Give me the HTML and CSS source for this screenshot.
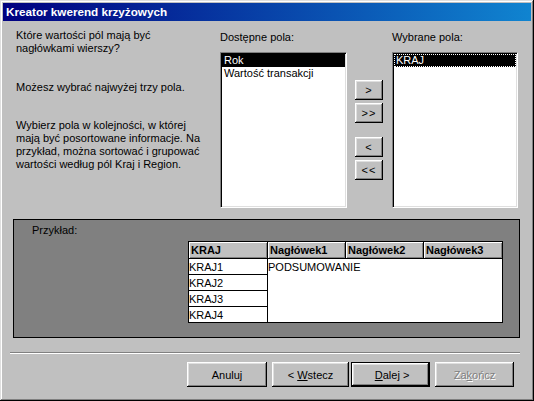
FILE: index.html
```html
<!DOCTYPE html>
<html lang="pl">
<head>
<meta charset="utf-8">
<title>Kreator kwerend krzyżowych</title>
<link rel="stylesheet" href="styles.css">
</head>
<body>
<div class="window">
  <div class="titlebar"><span class="title">Kreator kwerend krzyżowych</span></div>
  <div class="client">
    <div class="top">
      <div class="intro">
        <p class="q">Które wartości pól mają być<br>nagłówkami wierszy?</p>
        <p class="p2">Możesz wybrać najwyżej trzy pola.</p>
        <p class="p3">Wybierz pola w kolejności, w której<br>mają być posortowane informacje. Na<br>przykład, można sortować i grupować<br>wartości według pól Kraj i Region.</p>
      </div>
      <div class="field-col avail">
        <div class="label">Dostępne pola:</div>
        <div class="listbox">
          <div class="item selected">Rok</div>
          <div class="item">Wartość transakcji</div>
        </div>
      </div>
      <div class="movers">
        <button class="btn mv">&gt;</button>
        <button class="btn mv">&gt;&gt;</button>
        <button class="btn mv split">&lt;</button>
        <button class="btn mv">&lt;&lt;</button>
      </div>
      <div class="field-col chosen">
        <div class="label">Wybrane pola:</div>
        <div class="listbox">
          <div class="item selected focus">KRAJ</div>
        </div>
      </div>
    </div>
    <div class="sample">
      <div class="sample-label">Przykład:</div>
      <div class="grid">
        <div class="hd">KRAJ</div>
        <div class="hd">Nagłówek1</div>
        <div class="hd">Nagłówek2</div>
        <div class="hd">Nagłówek3</div>
        <div class="rc">KRAJ1</div>
        <div class="sum">PODSUMOWANIE</div>
        <div class="rc">KRAJ2</div>
        <div class="rc">KRAJ3</div>
        <div class="rc">KRAJ4</div>
      </div>
    </div>
    <div class="sep"></div>
    <div class="actions">
      <button class="btn act cancel">Anuluj</button>
      <button class="btn act back">&lt; <u>W</u>stecz</button>
      <button class="btn act next">&nbsp;<u>D</u>alej &gt;</button>
      <button class="btn act finish" disabled>Za<u>k</u>ończ</button>
    </div>
  </div>
</div>
</body>
</html>
```
FILE: styles.css
```css
* { box-sizing: border-box; }
html, body { margin: 0; padding: 0; }
body {
  width: 534px;
  height: 401px;
  background: #c0c0c0;
  font-family: "Liberation Sans", Arial, sans-serif;
  font-size: 11px;
  color: #000;
  overflow: hidden;
}
.window {
  width: 534px;
  height: 401px;
  background: #c0c0c0;
  padding: 3px;
  box-shadow: inset -1px -1px #000, inset 1px 1px #dfdfdf, inset -2px -2px #808080, inset 2px 2px #fff;
}
.titlebar {
  height: 18px;
  background: linear-gradient(90deg, #000080, #1084d0);
  color: #fff;
  font-weight: bold;
  font-size: 11.7px;
  line-height: 18px;
  padding-left: 3px;
  white-space: nowrap;
}
.client { display: flex; flex-direction: column; }
.top {
  display: flex;
  padding-top: 8px;
  padding-left: 13px;
}
.intro { width: 204px; }
.intro p { margin: 0; line-height: 13px; white-space: nowrap; }
.intro .p2 { margin-top: 26px; }
.intro .p3 { margin-top: 25px; }
.field-col { display: flex; flex-direction: column; }
.avail { width: 127px; }
.chosen { width: 126px; margin-left: 9px; }
.label { margin-top: 2px; line-height: 13px; white-space: nowrap; }
.listbox {
  margin-top: 8px;
  height: 156px;
  background: #fff;
  border: 1px solid;
  border-color: #808080 #fff #fff #808080;
  box-shadow: inset 1px 1px #000, inset -1px -1px #dfdfdf;
  padding: 1px;
}
.item {
  height: 13px;
  line-height: 13px;
  padding-left: 2px;
  white-space: nowrap;
}
.item.selected { background: #000; color: #fff; }
.item.focus { outline: 1px dotted #fff; outline-offset: -1px; }
.btn {
  font-family: inherit;
  font-size: 11px;
  color: #000;
  background: #c0c0c0;
  border: none;
  padding: 0;
  margin: 0;
  box-shadow: inset -1px -1px #000, inset 1px 1px #fff, inset -2px -2px #808080, inset 2px 2px #dfdfdf;
}
.movers {
  display: flex;
  flex-direction: column;
  margin-left: 8px;
  margin-top: 51px;
  gap: 3px;
}
.mv { width: 28px; height: 20px; line-height: 18px; letter-spacing: 1px; }
.mv.split { margin-top: 11px; }
.sample {
  margin-left: 10px;
  margin-top: 11px;
  width: 507px;
  height: 119px;
  background: #808080;
  border: 1px solid #000;
}
.sample-label { margin: 4px 0 0 18px; line-height: 13px; }
.grid {
  margin: 4px 0 0 174px;
  display: grid;
  grid-template-columns: 79px 78px 78px 79px;
  grid-template-rows: 17px 16px 16px 16px 16px;
  width: 315px;
  border-top: 1px solid #000;
  border-left: 1px solid #000;
}
.grid > div {
  border-right: 1px solid #000;
  border-bottom: 1px solid #000;
  white-space: nowrap;
  overflow: hidden;
}
.hd {
  background: #c0c0c0;
  font-weight: bold;
  padding-left: 2px;
  line-height: 16px;
  box-shadow: inset 1px 1px #fff, inset -1px -1px #808080;
}
.rc { background: #fff; line-height: 16px; padding-left: 0; }
.sum {
  grid-column: 2 / 5;
  grid-row: 2 / 6;
  background: #fff;
  line-height: 16px;
  padding-left: 0;
}
.sep {
  margin: 14px 0 0 7px;
  width: 510px;
  height: 2px;
  border-top: 1px solid #808080;
  border-bottom: 1px solid #fff;
}
.actions {
  display: flex;
  margin-top: 8px;
  padding-left: 184px;
}
.act { height: 25px; }
.cancel { width: 80px; }
.back { width: 77px; margin-left: 5px; }
.next {
  width: 79px;
  margin-left: 2px;
  border: 1px solid #000;
  box-shadow: inset -1px -1px #000, inset 1px 1px #fff, inset -2px -2px #808080, inset 2px 2px #dfdfdf;
}
.finish { width: 79px; margin-left: 5px; color: #808080; text-shadow: 1px 1px #fff; }
u { text-decoration: underline; text-underline-offset: 1px; }
```
